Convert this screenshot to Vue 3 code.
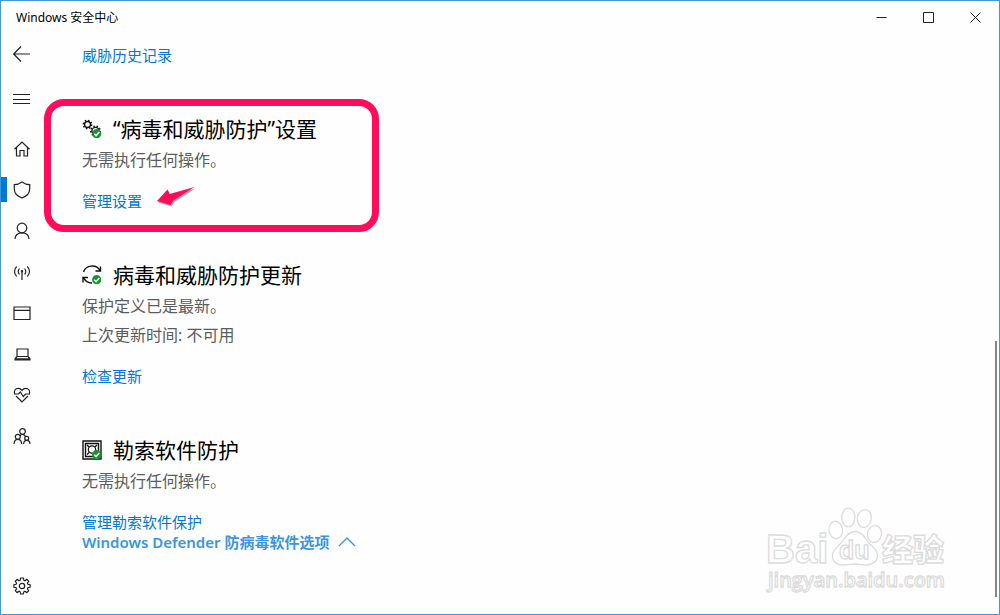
<script setup>
const navItems = [
  { id: 'home', label: '主页' },
  { id: 'shield', label: '病毒和威胁防护' },
  { id: 'account', label: '帐户保护' },
  { id: 'network', label: '防火墙和网络保护' },
  { id: 'browser', label: '应用和浏览器控制' },
  { id: 'device', label: '设备安全性' },
  { id: 'health', label: '设备性能和运行状况' },
  { id: 'family', label: '家庭选项' },
]

const sections = [
  {
    id: 'settings',
    title: '“病毒和威胁防护”设置',
    lines: ['无需执行任何操作。'],
    link: '管理设置',
  },
  {
    id: 'updates',
    title: '病毒和威胁防护更新',
    lines: ['保护定义已是最新。', '上次更新时间: 不可用'],
    link: '检查更新',
  },
  {
    id: 'ransomware',
    title: '勒索软件防护',
    lines: ['无需执行任何操作。'],
    link: '管理勒索软件保护',
  },
]
</script>

<template>
  <div class="window">
    <header class="titlebar">
      <span class="app-name">Windows 安全中心</span>
      <div class="controls">
        <button type="button" aria-label="最小化">
          <svg width="11" height="11" viewBox="0 0 11 11"><path d="M0.5 5.5h10" /></svg>
        </button>
        <button type="button" aria-label="最大化">
          <svg width="11" height="11" viewBox="0 0 11 11"><path d="M0.5 0.5h10v10h-10z" /></svg>
        </button>
        <button type="button" aria-label="关闭">
          <svg width="11" height="11" viewBox="0 0 11 11"><path d="M0.5 0.5l10 10M10.5 0.5l-10 10" /></svg>
        </button>
      </div>
    </header>

    <div class="body">
      <aside class="sidebar">
        <button class="side-btn back" type="button" aria-label="返回">
          <svg class="icon" width="18" height="18" viewBox="0 0 18 18"><path d="M8 1.500L0.700 9l7.300 7.500M0.700 9h16.300" /></svg>
        </button>
        <button class="side-btn menu" type="button" aria-label="打开导航">
          <svg class="icon" width="18" height="18" viewBox="0 0 18 18"><path d="M0 4.500h17M0 9.500h17M0 13.500h17" /></svg>
        </button>
        <nav class="nav">
          <a
            v-for="item in navItems"
            :key="item.id"
            href="#"
            class="nav-item"
            :class="{ active: item.id === 'shield' }"
            :aria-label="item.label"
          >
            <svg class="icon" width="18" height="18" viewBox="0 0 18 18">
              <path v-if="item.id === 'home'" d="M1.500 9.200L9 2l7.500 7.200M3.500 7.500v8.500h3.500v-5.500h4v5.500h3.500V7.500" />
              <path v-else-if="item.id === 'shield'" d="M9 1C6.600 2.700 4.200 3.600 1.300 3.700V8c0 4.200 3 7.200 7.700 9 4.700-1.800 7.700-4.800 7.700-9V3.700C13.800 3.600 11.400 2.700 9 1z" />
              <template v-else-if="item.id === 'account'">
                <circle cx="9" cy="6" r="4.800" />
                <path d="M2 17c0.200-4 3-6.200 7-6.200s6.800 2.200 7 6.200" />
              </template>
              <template v-else-if="item.id === 'network'">
                <path d="M9 8v9M6.400 5.500c-1.300 1.700-1.300 4.300 0 6M11.600 5.500c1.300 1.700 1.300 4.300 0 6M3.700 3.500c-2.900 2.800-2.900 7.200 0 10M14.300 3.500c2.900 2.800 2.900 7.200 0 10" />
                <circle cx="9" cy="8.300" r="0.600" />
              </template>
              <path v-else-if="item.id === 'browser'" d="M1 3h16v12.500H1zM1 6.300h16" />
              <path v-else-if="item.id === 'device'" d="M4 4h11v7.500H4zM4 11.500L2 13.800V15h15v-1.200l-2-2.300M2 13.800h15" />
              <path v-else-if="item.id === 'health'" d="M1.700 8C0.500 5 2.500 2.300 5.200 2.300 7 2.300 8.200 3.200 9 4.400c0.800-1.200 2-2.100 3.800-2.100 2.700 0 4.700 2.700 3.500 5.700M1 8h4.500l1.800-2 3 4.500L12.500 8H17M3 10l6 6 6-6" />
              <template v-else>
                <circle cx="9.500" cy="4.500" r="2.800" />
                <circle cx="4.800" cy="9.800" r="2.500" />
                <circle cx="13.700" cy="11.300" r="2" />
                <path d="M1 17c0.200-3.200 1.600-4.600 3.800-4.600S8.500 13.800 8.700 17M10.600 17c0.200-2.500 1.300-3.600 3.200-3.600s3 1.100 3.200 3.600M7 9c0.600-1.200 1.400-1.700 2.500-1.700 1.500 0 2.600 0.900 3 2.500" />
              </template>
            </svg>
          </a>
        </nav>
        <button class="side-btn gear" type="button" aria-label="设置">
          <svg class="icon" width="18" height="18" viewBox="0 0 18 18">
            <path d="M7.600 1h2.800l0.400 2.200 1.100 0.500 1.900-1.300 1.900 1.900-1.300 1.900 0.500 1.100 2.200 0.400v2.600l-2.200 0.400-0.500 1.100 1.300 1.900-1.900 1.900-1.900-1.300-1.100 0.500-0.400 2.200H7.600l-0.400-2.200-1.100-0.500-1.900 1.300-1.900-1.900 1.300-1.900-0.500-1.100L0.900 10.300V7.700l2.200-0.400 0.500-1.100-1.300-1.900 1.900-1.900 1.900 1.300 1.100-0.500z" />
            <circle cx="9" cy="9" r="2.700" />
          </svg>
        </button>
      </aside>

      <main class="content">
        <a class="link" href="#">威胁历史记录</a>

        <section v-for="s in sections" :key="s.id" class="section">
          <h2 class="heading">
            <svg class="badge-icon" width="20" height="20" viewBox="0 0 20 20">
              <template v-if="s.id === 'settings'">
                <circle cx="5.500" cy="5.500" r="3" class="ink" />
                <circle cx="5.500" cy="5.500" r="4.200" class="teeth" />
                <circle cx="13.500" cy="12" r="3.600" class="ink" />
                <circle cx="13.500" cy="12" r="4.800" class="teeth" />
              </template>
              <path v-else-if="s.id === 'updates'" class="ink" d="M1.500 7A9 8.500 0 0 1 18 5.500M18.500 1.500V6H13.500M10 18C6 18 3 16 1.500 12.500M1 17.500v-5h5" />
              <template v-else>
                <path class="ink" d="M1 1h18v18H1zM3.500 3.500h13v13h-13z" />
                <circle class="ink thin" cx="10" cy="9.500" r="3.700" />
                <path class="ink thin" d="M5 5l2.200 2M15 5l-2.200 2M5 14.500l2.200-2" />
              </template>
              <circle cx="14.700" cy="14.700" r="4.600" class="ok" />
              <path class="tick" d="M12.300 14.800l1.800 1.800 3.200-3.500" />
            </svg>
            <span>{{ s.title }}</span>
          </h2>
          <p v-for="line in s.lines" :key="line" class="desc">{{ line }}</p>
          <a class="link section-link" href="#">{{ s.link }}</a>

          <div v-if="s.id === 'settings'" class="callout" aria-hidden="true">
            <svg class="arrow" width="42" height="24" viewBox="0 0 42 24">
              <path class="arrow-shadow" d="M2 16.500L12.500 5l2 4.500L39.500 2.500 18.500 16l-3 4.500z" />
              <path class="arrow-body" d="M1 15L11.500 3.500l2 4.500L38.500 1 17.500 14.500l-3 4.500z" />
            </svg>
          </div>
        </section>

        <button class="expander" type="button">
          <span>Windows Defender 防病毒软件选项</span>
          <svg width="18" height="10" viewBox="0 0 18 10"><path d="M1 9l8-8 8 8" /></svg>
        </button>
      </main>
    </div>

    <div class="scroll-thumb"></div>

    <svg class="watermark" width="200" height="100" viewBox="760 500 200 100" aria-hidden="true">
      <text x="766" y="563" class="wm-brand">Bai</text>
      <ellipse cx="835.700" cy="530" rx="6.800" ry="8.800" transform="rotate(-8 835.700 530)" />
      <ellipse cx="848.300" cy="517.500" rx="6.600" ry="9.300" />
      <ellipse cx="864.300" cy="518.500" rx="7" ry="9" transform="rotate(10 864.300 518.500)" />
      <ellipse cx="874.500" cy="534" rx="7" ry="8.500" transform="rotate(12 874.500 534)" />
      <path d="M855 531.500c-6 0-9 4-12 9-3 5-10 8-10.500 14.500-0.500 7 5 10.500 11 10 4-0.300 7-1 11.500-1s8 1.300 12 1c6-0.500 11-4 10.500-10.500-0.500-6-7.500-9-10.500-14-3-5-6-9-12-9z" />
      <text x="839" y="559" class="wm-du">du</text>
      <text x="882" y="561" class="wm-cjk">经验</text>
      <text x="768" y="587" class="wm-url">jingyan.baidu.com</text>
    </svg>
  </div>
</template>

<style>
body {
  margin: 0;
  background: #fff;
}
</style>

<style scoped>
.window {
  position: relative;
  box-sizing: border-box;
  min-height: 100vh;
  display: flex;
  flex-direction: column;
  border: 1px solid #3f97de;
  background: #fefefe;
  color: #000;
  font-family: "Noto Sans", "Noto Sans CJK SC", sans-serif;
  overflow: hidden;
}

button {
  padding: 0;
  border: 0;
  background: none;
  font: inherit;
  color: inherit;
}

a {
  text-decoration: none;
}

svg {
  display: block;
  fill: none;
}

.titlebar {
  display: flex;
  align-items: center;
  justify-content: space-between;
  height: 33px;
  padding-left: 15px;
}

.app-name {
  font-size: 12px;
  line-height: 20px;
}

.controls {
  display: flex;
}

.controls button {
  display: grid;
  place-items: center;
  width: 47px;
  height: 33px;
}

.controls svg {
  stroke: #222;
}

.body {
  flex: 1;
  display: flex;
}

.sidebar {
  display: flex;
  flex-direction: column;
  width: 42px;
}

.icon {
  stroke: #222;
  stroke-width: 1.2;
}

.side-btn,
.nav-item {
  box-sizing: border-box;
  display: grid;
  place-items: center;
  width: 42px;
}

.back {
  height: 40px;
}

.menu {
  height: 50px;
}

.nav {
  padding-top: 4px;
}

.nav-item {
  height: 41px;
  background: linear-gradient(#0078d7, #0078d7) no-repeat left center / 0 25px;
}

.nav-item.active {
  background-size: 6px 25px;
}

.gear {
  height: 40px;
  margin-top: auto;
  margin-bottom: 8px;
}

.content {
  flex: 1;
  padding: 11px 39px 40px;
}

.link {
  display: block;
  width: fit-content;
  font-size: 15px;
  line-height: 20px;
  color: #0078d7;
}

.section {
  position: relative;
  margin-top: 49px;
}

.heading {
  display: flex;
  align-items: center;
  gap: 11px;
  margin: 0 0 2px;
  font-size: 21px;
  font-weight: 400;
  line-height: 30px;
}

.desc {
  margin: 0;
  font-size: 16px;
  line-height: 29px;
  color: #5c5c5c;
}

.section-link {
  margin-top: 16px;
}

.ink {
  stroke: #111;
  stroke-width: 1.4;
}

.thin {
  stroke-width: 1.2;
}

.teeth {
  stroke: #111;
  stroke-width: 1.4;
  stroke-dasharray: 1.5 1.8;
}

.ok {
  fill: #12962a;
}

.tick {
  stroke: #fff;
  stroke-width: 1.5;
}

.callout {
  position: absolute;
  box-sizing: border-box;
  left: -38px;
  top: -15px;
  width: 335px;
  height: 133px;
  border: 7px solid #ff0d5b;
  border-radius: 20px;
  pointer-events: none;
}

.arrow {
  position: absolute;
  left: 105px;
  top: 80px;
}

.arrow-body {
  fill: #ff0d5b;
}

.arrow-shadow {
  fill: #a8a8a8;
}

.expander {
  display: flex;
  align-items: center;
  gap: 9px;
  font-size: 15px;
  font-weight: 600;
  line-height: 20px;
  color: #3a96dd;
}

.expander svg {
  stroke: #3a96dd;
  stroke-width: 1.3;
}

.scroll-thumb {
  position: absolute;
  right: 2px;
  top: 340px;
  bottom: 17px;
  width: 2px;
  background: #858585;
}

.watermark {
  position: absolute;
  right: 39px;
  bottom: 14px;
  fill: #fff;
  stroke: #dcdcdc;
  stroke-width: 1.3;
}

.wm-brand,
.wm-du {
  font-family: "Liberation Sans", sans-serif;
  font-weight: 700;
}

.wm-brand {
  font-size: 40px;
}

.wm-du {
  font-size: 25px;
}

.wm-cjk {
  font-family: "Noto Sans CJK SC", sans-serif;
  font-weight: 900;
  font-size: 31px;
}

.wm-url {
  font-family: "Open Sans", sans-serif;
  font-weight: 600;
  font-size: 20px;
}
</style>
